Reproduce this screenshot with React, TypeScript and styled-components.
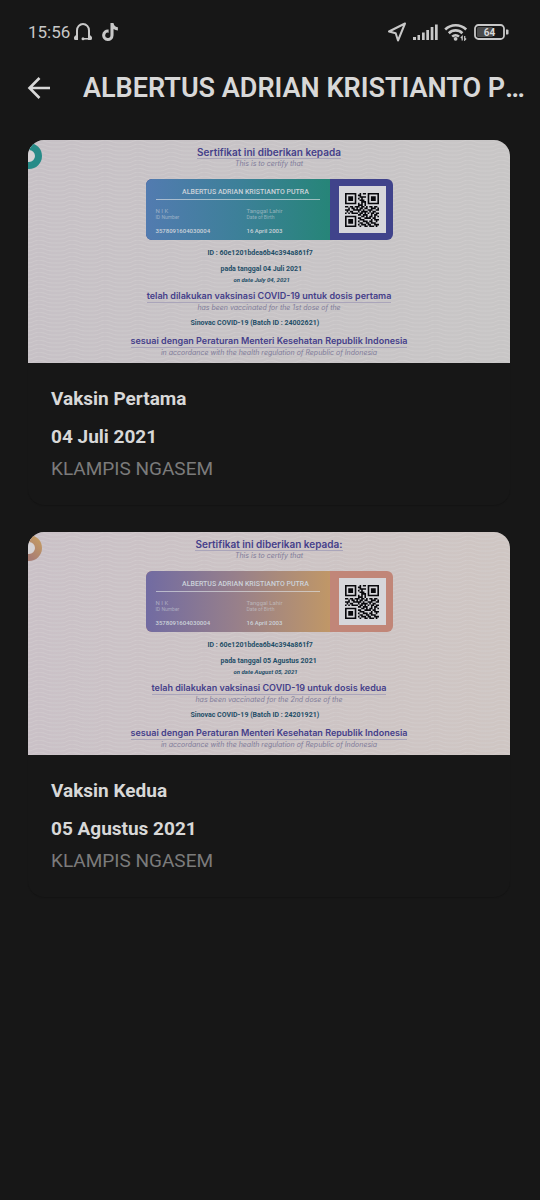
import React from "react";
import styled, { createGlobalStyle } from "styled-components";
import { FaTiktok } from "react-icons/fa6";

const GlobalStyle = createGlobalStyle`
  *, *::before, *::after { box-sizing: border-box; }
  body {
    margin: 0;
    background: #171717;
    color: #d8d8d8;
    font-family: Roboto, "Liberation Sans", sans-serif;
  }
  h1, h2, h3, p { margin: 0; }
`;

const Screen = styled.div`
  min-height: 100vh;
  display: flex;
  flex-direction: column;
  background: #171717;
`;

const StatusBar = styled.div`
  display: flex;
  align-items: center;
  justify-content: space-between;
  height: 64px;
  padding: 0 31px 0 28px;
`;

const StatusGroup = styled.div<{ $gap: number }>`
  display: flex;
  align-items: center;
  gap: ${(p) => p.$gap}px;
  color: #c8c8c8;
`;

const Clock = styled.time`
  font-size: 17px;
  line-height: 20px;
`;

const AppBar = styled.header`
  display: flex;
  align-items: center;
  gap: 32px;
  height: 48px;
  padding: 0 8px 0 27px;
`;

const BackButton = styled.button`
  display: flex;
  flex: none;
  padding: 0;
  border: 0;
  background: none;
  color: #d8d8d8;
  cursor: pointer;
`;

const Title = styled.h1`
  flex: 1;
  min-width: 0;
  overflow: hidden;
  white-space: nowrap;
  text-overflow: ellipsis;
  font-size: 27px;
  line-height: 32px;
  font-weight: 600;
`;

const List = styled.main`
  display: flex;
  flex-direction: column;
  gap: 27px;
  padding: 28px 30px 28px 28px;
`;

const Card = styled.article`
  overflow: hidden;
  border-radius: 16px;
  background: #171717;
  box-shadow: 0 1px 1px rgba(0, 0, 0, 0.15);
`;

const CardBody = styled.div`
  padding: 24px 23px;
`;

const CardHeading = styled.h2`
  font-size: 19px;
  line-height: 24px;
  font-weight: 700;
`;

const CardDate = styled.p`
  margin-top: 14px;
  font-size: 19px;
  line-height: 24px;
  font-weight: 700;
`;

const CardPlace = styled.p`
  margin-top: 8px;
  font-size: 19px;
  line-height: 24px;
  color: #7b7b7b;
`;

const Certificate = styled.section<{ $from: string; $to: string }>`
  position: relative;
  display: flex;
  flex-direction: column;
  align-items: center;
  padding: 6px 0;
  background: linear-gradient(90deg, ${(p) => p.$from}, ${(p) => p.$to});
  white-space: nowrap;
`;

const Backdrop = styled.svg`
  position: absolute;
  inset: 0;
  width: 100%;
  height: 100%;
`;

const Statement = styled.h3<{ $top?: number; $size: number }>`
  position: relative;
  margin-top: ${(p) => p.$top ?? 0}px;
  border-bottom: 1px solid #aaa5ba;
  font-family: Inter, "Open Sans", sans-serif;
  font-size: ${(p) => p.$size}px;
  line-height: 12px;
  font-weight: 600;
  color: #45408a;
`;

const Translation = styled.p`
  position: relative;
  font-family: Inter, "Open Sans", sans-serif;
  font-size: 7px;
  line-height: 9px;
  font-style: italic;
  color: #807c9a;
`;

const Details = styled.div`
  position: relative;
  width: 247px;
`;

const Detail = styled.p<{ $indent: number; $top: number; $italic?: boolean }>`
  margin-top: ${(p) => p.$top}px;
  padding-left: ${(p) => p.$indent}px;
  font-size: ${(p) => (p.$italic ? 6 : 7)}px;
  line-height: ${(p) => (p.$italic ? 8 : 9)}px;
  font-weight: 700;
  font-style: ${(p) => (p.$italic ? "italic" : "normal")};
  color: #1f4f68;
`;

const IdCard = styled.div<{ $accent: string }>`
  position: relative;
  display: flex;
  width: 247px;
  height: 61px;
  margin-top: 11px;
  overflow: hidden;
  border-radius: 6px;
  background: ${(p) => p.$accent};
`;

const IdInfo = styled.div<{ $from: string; $mid: string; $to: string }>`
  width: 184px;
  padding: 9px 10px 0;
  background: linear-gradient(90deg, ${(p) => p.$from}, ${(p) => p.$mid} 50%, ${(p) => p.$to});
  color: #ccd3da;
`;

const IdName = styled.p`
  padding-bottom: 3px;
  border-bottom: 1px solid rgba(220, 225, 228, 0.65);
  text-align: center;
  text-indent: 16px;
  font-size: 7px;
  line-height: 8px;
  font-weight: 500;
`;

const IdFields = styled.dl`
  display: grid;
  grid-template-columns: 91px 1fr;
  margin: 7px 0 0;
`;

const IdLabel = styled.dt`
  font-size: 6px;
  line-height: 7px;
  opacity: 0.6;
`;

const IdHint = styled.span`
  display: block;
  font-size: 5px;
  line-height: 6px;
`;

const IdValue = styled.dd`
  margin: 7px 0 0;
  font-size: 6px;
  line-height: 8px;
  font-weight: 500;
`;

const QrPlate = styled.div`
  display: grid;
  place-items: center;
  width: 47px;
  height: 47px;
  margin: 7px 0 0 9px;
  background: #d6d6da;
`;

const QR_ROWS = [
  "111111100101101111111",
  "100000101100001000001",
  "101110100111101011101",
  "101110101010001011101",
  "101110100111001011101",
  "100000100011101000001",
  "111111101010101111111",
  "000000001110100000000",
  "110110111011010110110",
  "001011010110110011101",
  "111001111101001110011",
  "010110001011110101100",
  "101011110110101011011",
  "000000001101110010110",
  "111111100011010110101",
  "100000101100111101100",
  "101110100111000010111",
  "101110101001110110010",
  "101110100110011011100",
  "100000101011101100111",
  "111111100100110111010",
];

const qrPath = QR_ROWS.map((row, y) =>
  [...row].map((cell, x) => (cell === "1" ? `M${x} ${y}h1v1h-1z` : "")).join("")
).join("");

const QrCode = () => (
  <svg width="34" height="34" viewBox="0 0 21 21" role="img" aria-label="QR">
    <path d={qrPath} fill="#08080c" />
  </svg>
);

const HeadphonesIcon = () => (
  <svg width="20" height="20" viewBox="0 0 20 20" fill="none" stroke="currentColor" strokeWidth="2">
    <path d="M4 14V8.500a6 6.500 0 0 1 12 0V14" />
    <path d="M3.500 12.500h1.500v5.500H2.500q-1.500 0-1.500-1.500v-1q0-1 1-1.500zM16.500 12.500H15v5.500h2.500q1.500 0 1.500-1.500v-1q0-1-1-1.500z" fill="currentColor" stroke="none" />
    <path d="M11 16.800h5" strokeWidth="1.600" />
    <circle cx="10" cy="16.800" r="1.500" fill="currentColor" stroke="none" />
  </svg>
);

const LocationIcon = () => (
  <svg width="20" height="20" viewBox="0 0 20 20" fill="none" stroke="currentColor" strokeWidth="2" strokeLinejoin="round">
    <path d="M18 1.500 2 9.500l6.700 1.800 2.300 7.200z" />
  </svg>
);

const SignalIcon = () => (
  <svg width="25" height="18" viewBox="0 0 25 18" fill="currentColor">
    <path d="M0 14h3v3H0zM4.500 12h2.500v5H4.500zM9 9.500h2.700V17H9zM13.300 7H16v10h-2.700zM17.700 4h2.700v13h-2.700zM22 1.500h2.700V17H22z" />
  </svg>
);

const WifiIcon = () => (
  <svg width="24" height="18" viewBox="0 0 24 18" fill="none" stroke="currentColor" strokeWidth="2.600">
    <path d="M1.200 6.500a15 15 0 0 1 21 0M4.800 10.200a9.700 9.700 0 0 1 13.600 0M8.200 13.600a5 5 0 0 1 6.800 0" />
    <circle cx="11.600" cy="15.800" r="1.900" fill="currentColor" stroke="none" />
    <path d="M18.200 17.500v-4l-1.400 1.500M20.700 13v4l1.400-1.500" strokeWidth="1.200" />
  </svg>
);

const BatteryIcon = () => (
  <svg width="35" height="16" viewBox="0 0 35 16" fill="none">
    <rect x="1" y="1" width="29" height="14" rx="3.500" stroke="currentColor" strokeWidth="1.800" />
    <rect x="3" y="3" width="16" height="10" rx="1.500" fill="#4b4b4b" />
    <path d="M32 5.500h1.500q1 0 1 1v3q0 1-1 1H32z" fill="currentColor" />
    <text x="15.500" y="11.500" textAnchor="middle" fontSize="10" fontWeight="700" fill="#d8d8d8">64</text>
  </svg>
);

const BackIcon = () => (
  <svg width="24" height="24" viewBox="0 0 24 24" fill="none" stroke="currentColor" strokeWidth="2.600">
    <path d="M23 12H3M12.500 2 2.500 12l10 10" />
  </svg>
);

interface Dose {
  key: string;
  heading: string;
  date: string;
  place: string;
  title: string;
  dateLine: string;
  dateEn: string;
  statement: string;
  statementEn: string;
  batch: string;
  paper: [string, string];
  ring: [string, string];
  band: [string, string, string];
  accent: string;
}

const doses: Dose[] = [
  {
    key: "first",
    heading: "Vaksin Pertama",
    date: "04 Juli 2021",
    place: "KLAMPIS NGASEM",
    title: "Sertifikat ini diberikan kepada",
    dateLine: "pada tanggal 04 Juli 2021",
    dateEn: "on date July 04, 2021",
    statement: "telah dilakukan vaksinasi COVID-19 untuk dosis pertama",
    statementEn: "has been vaccinated for the 1st dose of the",
    batch: "Sinovac COVID-19 (Batch ID : 24002621)",
    paper: ["#c7c1c6", "#c8c6c6"],
    ring: ["#278b88", "#278b88"],
    band: ["#527bb0", "#3d8099", "#268578"],
    accent: "#40438b",
  },
  {
    key: "second",
    heading: "Vaksin Kedua",
    date: "05 Agustus 2021",
    place: "KLAMPIS NGASEM",
    title: "Sertifikat ini diberikan kepada:",
    dateLine: "pada tanggal 05 Agustus 2021",
    dateEn: "on date August 05, 2021",
    statement: "telah dilakukan vaksinasi COVID-19 untuk dosis kedua",
    statementEn: "has been vaccinated for the 2nd dose of the",
    batch: "Sinovac COVID-19 (Batch ID : 24201921)",
    paper: ["#cac1c7", "#cfc6c3"],
    ring: ["#a97e74", "#c39a63"],
    band: ["#716ba2", "#98808a", "#c09767"],
    accent: "#c18678",
  },
];

const DoseCard = ({ dose }: { dose: Dose }) => (
  <Card>
    <Certificate $from={dose.paper[0]} $to={dose.paper[1]}>
      <Backdrop aria-hidden="true">
        <defs>
          <pattern id={`waves-${dose.key}`} width="33" height="4" patternUnits="userSpaceOnUse">
            <path d="M0 3q4 0 7-2t9 0q4 2 8 2t9 0" fill="none" stroke="#d9d6d7" strokeWidth="1" opacity="0.35" />
          </pattern>
          <linearGradient id={`ring-${dose.key}`} x1="0" x2="1" y1="1" y2="0">
            <stop offset="0.300" stopColor={dose.ring[0]} />
            <stop offset="1" stopColor={dose.ring[1]} />
          </linearGradient>
        </defs>
        <rect width="100%" height="100%" fill={`url(#waves-${dose.key})`} />
        <circle cx="1" cy="16" r="9.500" fill="#d6d3d5" stroke={`url(#ring-${dose.key})`} strokeWidth="7" />
      </Backdrop>
      <Statement $size={10}>{dose.title}</Statement>
      <Translation>This is to certify that</Translation>
      <IdCard $accent={dose.accent}>
        <IdInfo $from={dose.band[0]} $mid={dose.band[1]} $to={dose.band[2]}>
          <IdName>ALBERTUS ADRIAN KRISTIANTO PUTRA</IdName>
          <IdFields>
            <div>
              <IdLabel>N I K<IdHint>ID Number</IdHint></IdLabel>
              <IdValue>3578091604030004</IdValue>
            </div>
            <div>
              <IdLabel>Tanggal Lahir<IdHint>Date of Birth</IdHint></IdLabel>
              <IdValue>16 April 2003</IdValue>
            </div>
          </IdFields>
        </IdInfo>
        <QrPlate><QrCode /></QrPlate>
      </IdCard>
      <Details>
        <Detail $indent={62} $top={9}>ID : 60e1201bdea6b4c394a861f7</Detail>
        <Detail $indent={75} $top={7}>{dose.dateLine}</Detail>
        <Detail $indent={88} $top={2} $italic>{dose.dateEn}</Detail>
      </Details>
      <Statement $top={6} $size={9}>{dose.statement}</Statement>
      <Translation>{dose.statementEn}</Translation>
      <Details>
        <Detail $indent={45} $top={7}>{dose.batch}</Detail>
      </Details>
      <Statement $top={7} $size={9}>sesuai dengan Peraturan Menteri Kesehatan Republik Indonesia</Statement>
      <Translation>in accordance with the health regulation of Republic of Indonesia</Translation>
    </Certificate>
    <CardBody>
      <CardHeading>{dose.heading}</CardHeading>
      <CardDate>{dose.date}</CardDate>
      <CardPlace>{dose.place}</CardPlace>
    </CardBody>
  </Card>
);

export default function App() {
  return (
    <Screen>
      <GlobalStyle />
      <StatusBar>
        <StatusGroup $gap={8}>
          <StatusGroup $gap={3}>
            <Clock>15:56</Clock>
            <HeadphonesIcon />
          </StatusGroup>
          <FaTiktok size={18} />
        </StatusGroup>
        <StatusGroup $gap={6}>
          <LocationIcon />
          <SignalIcon />
          <WifiIcon />
          <BatteryIcon />
        </StatusGroup>
      </StatusBar>
      <AppBar>
        <BackButton type="button" aria-label="Kembali">
          <BackIcon />
        </BackButton>
        <Title>ALBERTUS ADRIAN KRISTIANTO PUTRA</Title>
      </AppBar>
      <List>
        {doses.map((dose) => (
          <DoseCard key={dose.key} dose={dose} />
        ))}
      </List>
    </Screen>
  );
}
